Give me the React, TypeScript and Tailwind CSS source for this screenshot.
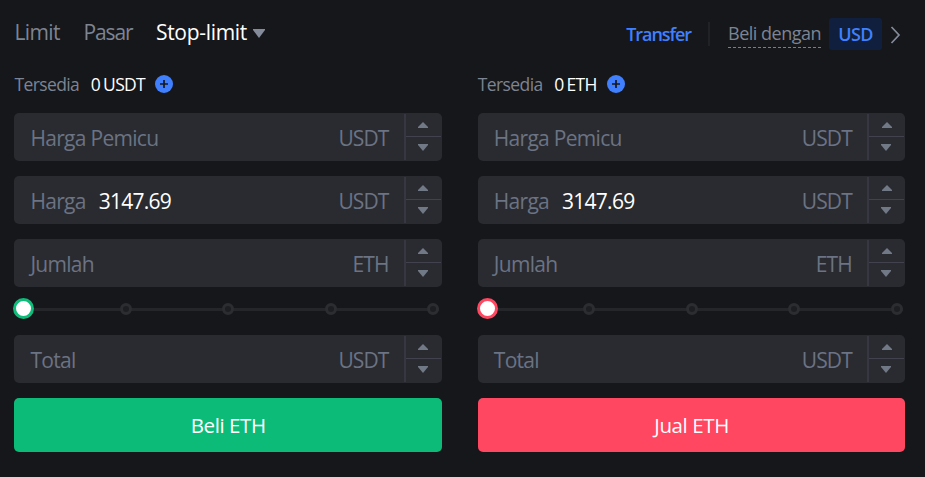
import type { ReactNode } from 'react';

type FieldProps = { label: string; value?: string; unit: string };

function Stepper() {
  return (
    <div className="my-px flex h-[46px] w-[38px] shrink-0 flex-col border-l-2 border-[#363740] pr-px">
      <div className="flex h-[23px] items-center justify-center border-b border-[#41424d]">
        <svg width="10" height="6" viewBox="0 0 10 6">
          <path d="M5 0 10 5v1H0V5z" fill="#717886" />
        </svg>
      </div>
      <div className="flex h-[22px] items-start justify-center pt-[7px]">
        <svg width="10" height="7" viewBox="0 0 10 7" className="mr-px">
          <path d="M0 0h10v1L5 7 0 1z" fill="#717886" />
        </svg>
      </div>
    </div>
  );
}

function Field({ label, value, unit }: FieldProps) {
  return (
    <div className="flex h-12 items-center rounded-[5px] bg-[#2a2b30] pl-4 text-[21px] text-[#6b7384]">
      <span className="pt-[3px] tracking-[-0.7px]">{label}</span>
      {value && <span className="ml-[13px] pt-[3px] tracking-[-0.75px] text-white">{value}</span>}
      <span className="mr-[15.5px] ml-auto pt-[3px] tracking-[-0.9px]">{unit}</span>
      <Stepper />
    </div>
  );
}

function Slider({ ring }: { ring: string }) {
  return (
    <div className="mt-[10px] mb-4 grid h-[22px] items-center pr-[2.8px]">
      <div className="col-start-1 row-start-1 mt-0.5 ml-2.5 h-[3px] bg-[#25262a]" />
      <div className="col-start-1 row-start-1 -ml-[1px] flex items-center justify-between">
        <div className={`size-[21px] rounded-full border-[3px] bg-white ${ring}`} />
        <div className="mt-px -ml-[5px] size-3 rounded-full border-[3px] border-[#2c2d31] bg-[#1d1e22]" />
        <div className="mt-px size-3 rounded-full border-[3px] border-[#2c2d31] bg-[#1d1e22]" />
        <div className="mt-px size-3 rounded-full border-[3px] border-[#2c2d31] bg-[#1d1e22]" />
        <div className="mt-px size-3 rounded-full border-[3px] border-[#2c2d31] bg-[#1d1e22]" />
      </div>
    </div>
  );
}

function OrderForm({ asset, ring, children }: { asset: string; ring: string; children: ReactNode }) {
  return (
    <section className="w-[427.6px]">
      <div className="flex h-5 items-center text-[17.5px]">
        <span className="tracking-[-0.6px] text-[#7d8493]">Tersedia</span>
        <span className="ml-[11.5px] tracking-[-0.7px] text-white [word-spacing:-0.8px]">0 {asset}</span>
        <svg width="18" height="18" viewBox="0 0 18 18" className="ml-2.5">
          <circle cx="9" cy="9" r="9" fill="#4080ff" />
          <path d="M9 5v8M5 9h8" stroke="#16171a" strokeWidth="1.7" />
        </svg>
      </div>
      <div className="mt-[19px] flex flex-col gap-[15px]">
        <Field label="Harga Pemicu" unit="USDT" />
        <Field label="Harga" value="3147.69" unit="USDT" />
        <Field label="Jumlah" unit="ETH" />
      </div>
      <Slider ring={ring} />
      <Field label="Total" unit="USDT" />
      {children}
    </section>
  );
}

export default function App() {
  return (
    <main className="h-[477px] w-[925px] overflow-hidden bg-[#16171a] font-['Open_Sans','Noto_Sans',sans-serif]">
      <header className="flex h-[74px] items-start pr-[24px] pl-[14.4px]">
        <nav className="mt-[18px] flex h-[30px] items-center text-[21px] text-[#7d8493]">
          <span className="tracking-[-0.6px]">Limit</span>
          <span className="ml-[23.5px] tracking-[-1.1px]">Pasar</span>
          <span className="ml-[23.5px] font-medium tracking-[-0.3px] text-white">Stop-limit</span>
          <svg width="12" height="9" viewBox="0 0 12 9" className="ml-1.5">
            <path d="M0 0h12v1L6 9 0 1z" fill="#848b9b" />
          </svg>
        </nav>
        <div className="mt-[18px] ml-auto flex h-8 items-center text-[18px]">
          <span className="pt-px font-semibold tracking-[-1.05px] text-[#4080ff]">Transfer</span>
          <span className="ml-[17px] h-6 w-[2px] bg-[#212226]" />
          <span className="ml-[18px] h-7 border-b border-dashed border-[#777d8a] leading-[26px] tracking-[-0.5px] text-[#7d8493]">
            Beli dengan
          </span>
          <span className="ml-2 flex h-8 w-[53px] items-center justify-center rounded-[3px] bg-[#101f3d] font-semibold tracking-[-0.6px] text-[#4080ff]">
            USD
          </span>
          <svg width="11" height="18" viewBox="0 0 11 18" className="ml-2 mt-0.5" fill="none">
            <path d="m1.5 1 7.5 8-7.5 8" stroke="#848b9b" strokeWidth="1.7" />
          </svg>
        </div>
      </header>
      <div className="flex gap-[35.8px] pl-[14.4px]">
        <OrderForm asset="USDT" ring="border-[#0ebd79]">
          <button className="mt-[15px] h-[54px] w-full rounded-[5px] bg-[#0dbb78] text-[20.5px] tracking-[-0.4px] text-white">
            Beli ETH
          </button>
        </OrderForm>
        <OrderForm asset="ETH" ring="border-[#ff4761]">
          <button className="mt-[15px] h-[54px] w-full rounded-[5px] bg-[#ff4761] text-[20.5px] tracking-[-0.4px] text-white">
            Jual ETH
          </button>
        </OrderForm>
      </div>
    </main>
  );
}
